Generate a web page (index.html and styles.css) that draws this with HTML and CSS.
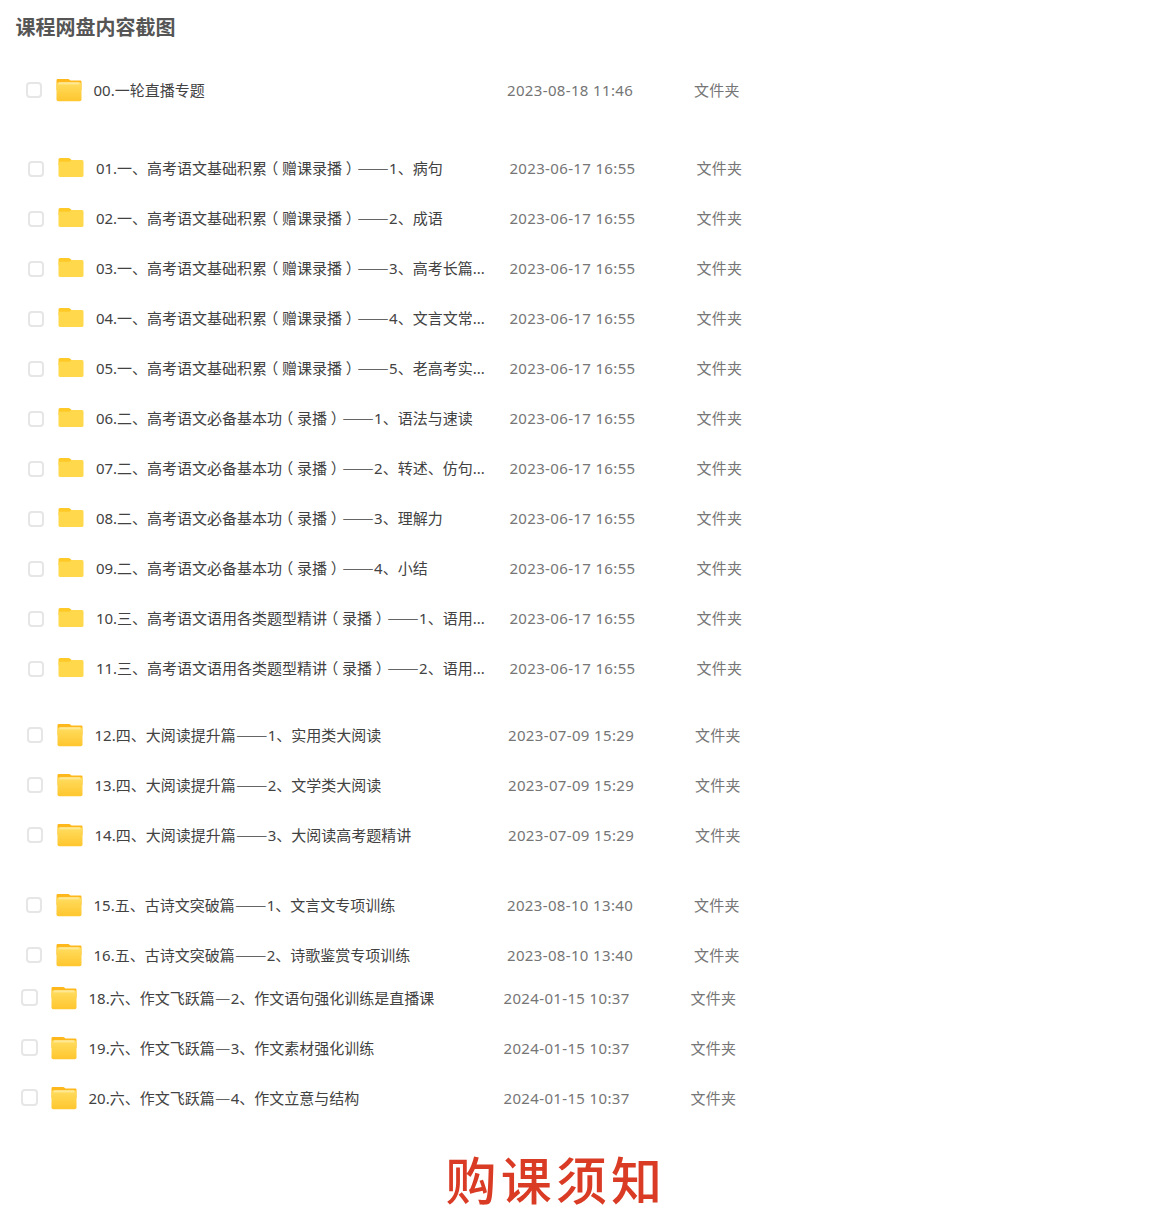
FILE: index.html
```html
<!DOCTYPE html>
<html lang="zh-CN">
<head>
<meta charset="UTF-8" />
<meta name="viewport" content="width=device-width, initial-scale=1" />
<title>课程网盘内容截图</title>
<link rel="stylesheet" href="styles.css">
</head>
<body>

<svg class="defs" aria-hidden="true">
  <defs>
    <linearGradient id="front" x1="0" y1="0" x2="0" y2="1">
      <stop offset="0" stop-color="#ffdd60" />
      <stop offset="1" stop-color="#ffc62e" />
    </linearGradient>
    <linearGradient id="shine" x1="0" y1="0" x2="0" y2="1">
      <stop offset="0" stop-color="#fff0b8" />
      <stop offset="1" stop-color="#ffdd60" />
    </linearGradient>
    <symbol id="folder" viewBox="0 0 26 24">
      <path d="M.5 4V2.2Q.5 1 1.7 1H12q1 0 1.6.7l.8.9h9.9q1.2 0 1.2 1.2V12H.5z" fill="#ffb81c" />
      <path d="M.5 5.5 2.2 4.2h21.6l1.7 1.3v16q0 1.7-1.7 1.7H2.2Q.5 23.2.5 21.5z" fill="url(#front)" />
      <path d="M2.6 7V5.6q0-1.2 1.2-1.2h18.4q1.2 0 1.2 1.2V7z" fill="url(#shine)" />
    </symbol>
    <symbol id="folder-flat" viewBox="0 0 26 24">
      <path d="M.5 9V3.5Q.5 2 2 2h8.3q1 0 1.7.6L14.5 5v5z" fill="#ffc928" />
      <path d="M.5 7Q.5 5.8 2 5.8h8.6q1 0 1.8-.8l1-.9H24q1.5 0 1.5 1.5v14q0 1.4-1.5 1.4H2Q.5 21 .5 19.6z" fill="#ffd84b" />
    </symbol>
  </defs>
</svg>

<h1>课程网盘内容截图</h1>

<main>
  <ul class="files live">
    <li><i class="check"></i><svg class="icon"><use href="#folder" /></svg><span class="name">00.一轮直播专题</span><span class="date">2023-08-18 11:46</span><span class="type">文件夹</span></li>
  </ul>

  <ul class="files basic">
    <li><i class="check"></i><svg class="icon"><use href="#folder-flat" /></svg><span class="name">01.一、高考语文基础积累<span class="paren">（</span>赠课录播<span class="paren">）</span><b>——</b>1、病句</span><span class="date">2023-06-17 16:55</span><span class="type">文件夹</span></li>
    <li><i class="check"></i><svg class="icon"><use href="#folder-flat" /></svg><span class="name">02.一、高考语文基础积累<span class="paren">（</span>赠课录播<span class="paren">）</span><b>——</b>2、成语</span><span class="date">2023-06-17 16:55</span><span class="type">文件夹</span></li>
    <li><i class="check"></i><svg class="icon"><use href="#folder-flat" /></svg><span class="name">03.一、高考语文基础积累<span class="paren">（</span>赠课录播<span class="paren">）</span><b>——</b>3、高考长篇...</span><span class="date">2023-06-17 16:55</span><span class="type">文件夹</span></li>
    <li><i class="check"></i><svg class="icon"><use href="#folder-flat" /></svg><span class="name">04.一、高考语文基础积累<span class="paren">（</span>赠课录播<span class="paren">）</span><b>——</b>4、文言文常...</span><span class="date">2023-06-17 16:55</span><span class="type">文件夹</span></li>
    <li><i class="check"></i><svg class="icon"><use href="#folder-flat" /></svg><span class="name">05.一、高考语文基础积累<span class="paren">（</span>赠课录播<span class="paren">）</span><b>——</b>5、老高考实...</span><span class="date">2023-06-17 16:55</span><span class="type">文件夹</span></li>
    <li><i class="check"></i><svg class="icon"><use href="#folder-flat" /></svg><span class="name">06.二、高考语文必备基本功<span class="paren">（</span>录播<span class="paren">）</span><b>——</b>1、语法与速读</span><span class="date">2023-06-17 16:55</span><span class="type">文件夹</span></li>
    <li><i class="check"></i><svg class="icon"><use href="#folder-flat" /></svg><span class="name">07.二、高考语文必备基本功<span class="paren">（</span>录播<span class="paren">）</span><b>——</b>2、转述、仿句...</span><span class="date">2023-06-17 16:55</span><span class="type">文件夹</span></li>
    <li><i class="check"></i><svg class="icon"><use href="#folder-flat" /></svg><span class="name">08.二、高考语文必备基本功<span class="paren">（</span>录播<span class="paren">）</span><b>——</b>3、理解力</span><span class="date">2023-06-17 16:55</span><span class="type">文件夹</span></li>
    <li><i class="check"></i><svg class="icon"><use href="#folder-flat" /></svg><span class="name">09.二、高考语文必备基本功<span class="paren">（</span>录播<span class="paren">）</span><b>——</b>4、小结</span><span class="date">2023-06-17 16:55</span><span class="type">文件夹</span></li>
    <li><i class="check"></i><svg class="icon"><use href="#folder-flat" /></svg><span class="name">10.三、高考语文语用各类题型精讲<span class="paren">（</span>录播<span class="paren">）</span><b>——</b>1、语用...</span><span class="date">2023-06-17 16:55</span><span class="type">文件夹</span></li>
    <li><i class="check"></i><svg class="icon"><use href="#folder-flat" /></svg><span class="name">11.三、高考语文语用各类题型精讲<span class="paren">（</span>录播<span class="paren">）</span><b>——</b>2、语用...</span><span class="date">2023-06-17 16:55</span><span class="type">文件夹</span></li>
  </ul>

  <ul class="files reading">
    <li><i class="check"></i><svg class="icon"><use href="#folder" /></svg><span class="name">12.四、大阅读提升篇<b>——</b>1、实用类大阅读</span><span class="date">2023-07-09 15:29</span><span class="type">文件夹</span></li>
    <li><i class="check"></i><svg class="icon"><use href="#folder" /></svg><span class="name">13.四、大阅读提升篇<b>——</b>2、文学类大阅读</span><span class="date">2023-07-09 15:29</span><span class="type">文件夹</span></li>
    <li><i class="check"></i><svg class="icon"><use href="#folder" /></svg><span class="name">14.四、大阅读提升篇<b>——</b>3、大阅读高考题精讲</span><span class="date">2023-07-09 15:29</span><span class="type">文件夹</span></li>
  </ul>

  <ul class="files poetry">
    <li><i class="check"></i><svg class="icon"><use href="#folder" /></svg><span class="name">15.五、古诗文突破篇<b>——</b>1、文言文专项训练</span><span class="date">2023-08-10 13:40</span><span class="type">文件夹</span></li>
    <li><i class="check"></i><svg class="icon"><use href="#folder" /></svg><span class="name">16.五、古诗文突破篇<b>——</b>2、诗歌鉴赏专项训练</span><span class="date">2023-08-10 13:40</span><span class="type">文件夹</span></li>
  </ul>

  <ul class="files writing">
    <li><i class="check"></i><svg class="icon"><use href="#folder" /></svg><span class="name">18.六、作文飞跃篇<b>—</b>2、作文语句强化训练是直播课</span><span class="date">2024-01-15 10:37</span><span class="type">文件夹</span></li>
    <li><i class="check"></i><svg class="icon"><use href="#folder" /></svg><span class="name">19.六、作文飞跃篇<b>—</b>3、作文素材强化训练</span><span class="date">2024-01-15 10:37</span><span class="type">文件夹</span></li>
    <li><i class="check"></i><svg class="icon"><use href="#folder" /></svg><span class="name">20.六、作文飞跃篇<b>—</b>4、作文立意与结构</span><span class="date">2024-01-15 10:37</span><span class="type">文件夹</span></li>
  </ul>
</main>

<h2>购课须知</h2>

</body>
</html>
```
FILE: styles.css
```css
* { box-sizing: border-box; }
body { margin: 0; height: 1217px; overflow: hidden; background: #fff; color: #424242; font-family: "Noto Sans", "Noto Sans CJK SC", sans-serif; font-size: 15px; }
.defs { display: block; width: 0; height: 0; }
h1 { margin: 0 0 0 15.5px; padding-top: 12px; height: 65px; font-family: "Noto Sans CJK SC", sans-serif; font-size: 20px; line-height: 30px; font-weight: bold; color: #555; }

.files { list-style: none; margin: 0; padding: 0; }
.files li { display: grid; grid-template-columns: 30px 37.5px 413.5px 187px 60px; align-items: center; height: 50px; line-height: 24px; white-space: nowrap; }
.live { margin-left: 26px; }
.basic { margin: 28px 0 0 28.4px; }
.reading { margin: 17px 0 0 27px; }
.poetry { margin: 20px 0 0 26px; }
.writing { margin: -7.4px 0 0 21px; }
.writing li { grid-template-columns: 30px 37.5px 415px 187px 60px; }

.check { display: block; width: 16px; height: 16px; border: 2px solid #e6e6e6; border-radius: 4px; background: #fff; }
.basic .check { margin-top: 2px; }
.writing .check { width: 17px; height: 17px; }
.icon { display: block; width: 26px; height: 24px; margin-left: -0.4px; }
.name b { font-family: "Noto Sans CJK SC", sans-serif; font-size: 16px; font-weight: 500; line-height: 1; vertical-align: -1px; }
/* half-width brackets centred in a full-width cell */
.paren { display: inline-block; width: 15px; text-align: center; font-family: "Noto Sans CJK SC", sans-serif; font-feature-settings: "halt"; line-height: 1; }
.date { color: #757575; letter-spacing: 0.35px; }
.type { color: #757575; letter-spacing: 0.3px; }

h2 { margin: 17px 0 0 445.5px; font-family: "Noto Sans CJK SC", sans-serif; font-size: 51px; line-height: 76px; font-weight: 500; letter-spacing: 4.2px; color: #d93b24; }
```
